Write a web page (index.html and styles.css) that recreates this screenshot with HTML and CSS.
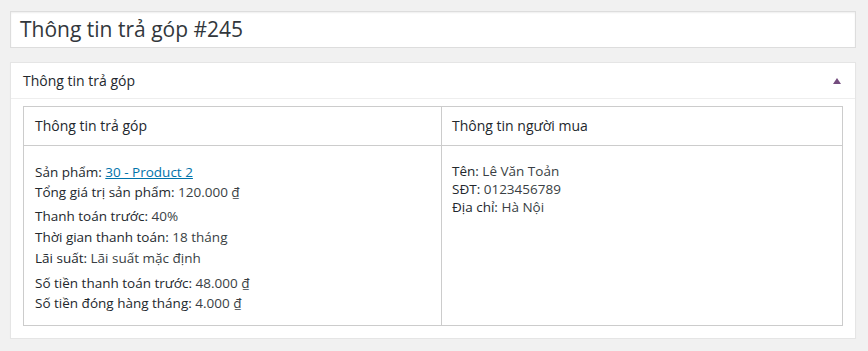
FILE: index.html
```html
<!DOCTYPE html>
<html lang="vi">
<head>
<meta charset="utf-8">
<title>Thông tin trả góp #245</title>
<link rel="stylesheet" href="styles.css">
</head>
<body>
<div class="wrap">
  <div class="title-box">Thông tin trả góp #245</div>
  <div class="postbox">
    <div class="postbox-head">
      <h2 class="postbox-title">Thông tin trả góp</h2>
      <span class="toggle"></span>
    </div>
    <div class="postbox-inside">
      <div class="info-table">
        <div class="cell head">Thông tin trả góp</div>
        <div class="cell head right">Thông tin người mua</div>
        <div class="cell body">
          <div class="group">
            <div class="line l20"><span class="lbl">Sản phẩm:</span> <a href="#" class="link">30 - Product 2</a></div>
            <div class="line l20"><span class="lbl">Tổng giá trị sản phẩm:</span> 120.000 ₫</div>
          </div>
          <div class="group">
            <div class="line l21"><span class="lbl">Thanh toán trước:</span> 40%</div>
            <div class="line l21"><span class="lbl">Thời gian thanh toán:</span> 18 tháng</div>
            <div class="line l21"><span class="lbl">Lãi suất:</span> Lãi suất mặc định</div>
          </div>
          <div class="group">
            <div class="line l20"><span class="lbl">Số tiền thanh toán trước:</span> 48.000 ₫</div>
            <div class="line l20"><span class="lbl">Số tiền đóng hàng tháng:</span> 4.000 ₫</div>
          </div>
        </div>
        <div class="cell body right">
          <div class="buyer">
            <div class="line l18"><span class="lbl">Tên:</span> Lê Văn Toản</div>
            <div class="line l18"><span class="lbl">SĐT:</span> 0123456789</div>
            <div class="line l18"><span class="lbl">Địa chỉ:</span> Hà Nội</div>
          </div>
        </div>
      </div>
    </div>
  </div>
</div>
</body>
</html>
```
FILE: styles.css
```css
html, body {
  margin: 0;
  padding: 0;
  background: #f1f1f1;
}
body {
  font-family: "Open Sans", "Noto Sans", sans-serif;
  color: #3a3f44;
  font-size: 13.5px;
}
.wrap {
  padding: 11px 12px 0 10px;
}
.title-box {
  height: 35px;
  border: 1px solid #ddd;
  background: #fff;
  box-shadow: inset 0 1px 2px rgba(0,0,0,0.07);
  padding: 0 9px;
  font-size: 21px;
  line-height: 35px;
  color: #32373c;
}
.postbox {
  margin-top: 14px;
  border: 1px solid #e5e5e5;
  background: #fff;
  box-shadow: 0 1px 1px rgba(0,0,0,0.04);
}
.postbox-head {
  display: flex;
  align-items: center;
  justify-content: space-between;
  height: 35px;
  border-bottom: 1px solid #eee;
  padding: 0 14px 0 12px;
}
.postbox-title {
  margin: 0;
  font-size: 14px;
  font-weight: normal;
  color: #23282d;
}
.toggle {
  width: 0;
  height: 0;
  border-left: 4px solid transparent;
  border-right: 4px solid transparent;
  border-bottom: 6px solid #744c7e;
  margin-top: 1px;
}
.postbox-inside {
  padding: 7px 12px 12px;
}
.info-table {
  display: grid;
  grid-template-columns: 417px 1fr;
  border: 1px solid #ccc;
}
.cell {
  padding: 0 11px;
}
.cell.right {
  border-left: 1px solid #ccc;
  padding-left: 10px;
}
.cell.head {
  height: 38px;
  line-height: 38px;
  border-bottom: 1px solid #ccc;
  font-size: 14px;
  color: #23282d;
}
.cell.body {
  padding-top: 16px;
  padding-bottom: 12px;
}
.group + .group {
  margin-top: 4px;
}
.line {
  white-space: nowrap;
}
.l20 { line-height: 20px; }
.l21 { line-height: 21px; }
.l18 { line-height: 18px; }
.buyer {
  padding-top: 0;
}
.lbl {
  color: #23282d;
}
.link {
  color: #0073aa;
  text-decoration: underline;
}
```
